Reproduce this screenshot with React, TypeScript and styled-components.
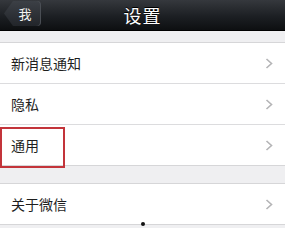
import React from 'react';
import styled, { createGlobalStyle } from 'styled-components';

const GlobalStyle = createGlobalStyle`
  html, body {
    margin: 0;
    padding: 0;
    background: #efeff1;
    font-family: "Noto Sans CJK SC", "Noto Sans", sans-serif;
  }
`

const Page = styled.div`
  width: 285px;
  height: 228px;
  overflow: hidden;
  background: #efeff1;
`

const NavBar = styled.header`
  height: 31px;
  display: grid;
  grid-template-columns: 1fr auto 1fr;
  align-items: start;
  padding: 1px 4px 0;
  box-sizing: border-box;
  background: linear-gradient(#35383d 0%, #1c1f23 55%, #0d0f11 100%);
  border-bottom: 1px solid #000;
`

const BackButton = styled.div`
  width: 37px;
  height: 25px;
  display: flex;
  align-items: center;
  justify-content: center;
  padding-left: 5px;
  box-sizing: border-box;
  color: #f2f2f2;
  font-size: 13px;
  background: linear-gradient(#3c4046, #22252a);
  clip-path: polygon(9px 0, 100% 0, 100% 100%, 9px 100%, 0 50%);
  border-radius: 0 4px 4px 0;
  box-shadow: inset -1px 0 0 #4a4e54;
`

const Title = styled.h1`
  margin: 0;
  line-height: 29px;
  font-size: 18px;
  font-weight: 400;
  color: #fff;
  letter-spacing: 1px;
  text-shadow: 0 -1px 0 #000;
`

const Group = styled.section<{ $top: number }>`
  margin-top: ${p => p.$top}px;
  background: #fff;
  border-top: 1px solid #d6d6d8;
  border-bottom: 1px solid #d6d6d8;
`

const Row = styled.div`
  position: relative;
  height: 40px;
  display: flex;
  align-items: center;
  justify-content: space-between;
  padding: 0 12px 0 11px;
  & + & {
    border-top: 1px solid #dcdcde;
  }
`

const Label = styled.span`
  font-size: 14px;
  color: #1e1e1e;
`

const Highlight = styled.div`
  position: absolute;
  left: 0;
  top: 2px;
  width: 65px;
  height: 41px;
  box-sizing: border-box;
  border: 2px solid #c3343a;
`

const Dot = styled.div`
  position: absolute;
  left: 141px;
  bottom: -2px;
  width: 4px;
  height: 4px;
  border-radius: 50%;
  background: #111;
`

const Chevron = () => (
  <svg width="8" height="11" viewBox="0 0 8 11">
    <polyline points="1.5,1 6.5,5.5 1.5,10" fill="none" stroke="#b4b4b6" strokeWidth="1.6" />
  </svg>
)

function App() {
  return (
    <Page>
      <GlobalStyle />
      <NavBar>
        <div>
          <BackButton>我</BackButton>
        </div>
        <Title>设置</Title>
        <div />
      </NavBar>
      <Group $top={11}>
        <Row>
          <Label>新消息通知</Label>
          <Chevron />
        </Row>
        <Row>
          <Label>隐私</Label>
          <Chevron />
        </Row>
        <Row>
          <Label>通用</Label>
          <Chevron />
          <Highlight />
        </Row>
      </Group>
      <Group $top={17}>
        <Row>
          <Label>关于微信</Label>
          <Chevron />
          <Dot />
        </Row>
      </Group>
    </Page>
  );
}

export default App;
